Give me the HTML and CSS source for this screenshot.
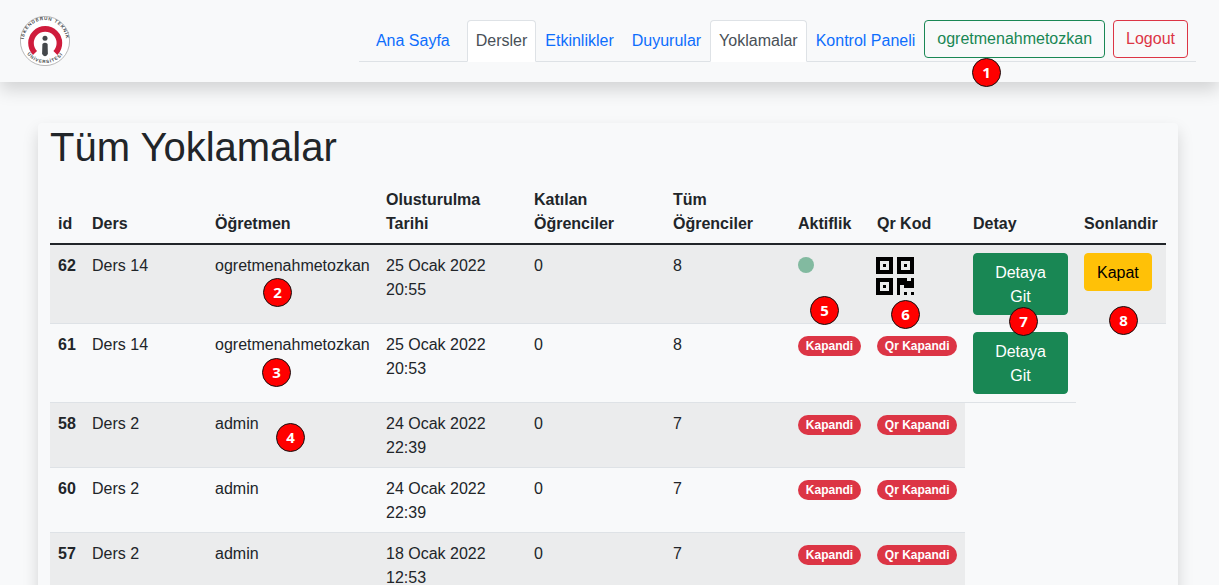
FILE: index.html
```html
<!DOCTYPE html>
<html lang="tr">
<head>
<meta charset="utf-8">
<title>Tüm Yoklamalar</title>
<link rel="stylesheet" href="styles.css">
</head>
<body>
<header class="navbar">
  <a class="logo" href="#">
    <svg width="50" height="50" viewBox="0 0 50 50" aria-label="İskenderun Teknik Üniversitesi">
      <defs>
        <path id="arcTop" d="M4.6 31 A21.2 21.2 0 1 1 45.4 31"/>
        <path id="arcBottom" d="M3.5 31 A22.4 22.4 0 0 0 46.5 31"/>
      </defs>
      <circle cx="25" cy="25" r="24.6" fill="#fff" stroke="#9a9a9a" stroke-width=".7"/>
      <text class="logo-text"><textPath href="#arcTop" startOffset="50%" text-anchor="middle">İSKENDERUN TEKNİK</textPath></text>
      <text class="logo-text"><textPath href="#arcBottom" startOffset="50%" text-anchor="middle">ÜNİVERSİTESİ</textPath></text>
      <path d="M15 37 A14.2 14.2 0 1 1 35.4 37" fill="none" stroke="#cf1c3c" stroke-width="5.6"/>
      <circle cx="25" cy="22.3" r="2.5" fill="#45484b"/>
      <path d="M22.4 28 Q25 25.6 27.6 28 L27.9 38 Q25 42.5 22.1 38Z" fill="#45484b"/>
    </svg>
  </a>
  <ul class="tabs">
    <li class="tab-first"><a class="tab" href="#">Ana Sayfa</a></li>
    <li><a class="tab active" href="#">Dersler</a></li>
    <li><a class="tab" href="#">Etkinlikler</a></li>
    <li><a class="tab" href="#">Duyurular</a></li>
    <li><a class="tab active" href="#">Yoklamalar</a></li>
    <li><a class="tab" href="#">Kontrol Paneli</a></li>
    <li class="tab-btn"><a class="btn btn-outline-success" href="#">ogretmenahmetozkan</a></li>
    <li class="tab-btn"><a class="btn btn-outline-danger" href="#">Logout</a></li>
  </ul>
</header>

<main class="card">
  <h1>Tüm Yoklamalar</h1>
  <table>
    <colgroup>
      <col class="c-id"><col class="c-ders"><col class="c-ogr"><col class="c-tarih"><col class="c-kat"><col class="c-tum"><col class="c-akt"><col class="c-qr"><col class="c-det"><col class="c-son">
    </colgroup>
    <thead>
      <tr><th>id</th><th>Ders</th><th>Öğretmen</th><th>Olusturulma Tarihi</th><th>Katılan Öğrenciler</th><th>Tüm Öğrenciler</th><th>Aktiflik</th><th>Qr Kod</th><th>Detay</th><th>Sonlandir</th></tr>
    </thead>
    <tbody>
      <tr class="odd">
        <th>62</th><td>Ders 14</td><td>ogretmenahmetozkan</td><td>25 Ocak 2022 20:55</td><td>0</td><td>8</td>
        <td><span class="dot"></span></td>
        <td>
          <svg class="qr" width="38" height="38" viewBox="0 0 38 38" shape-rendering="crispEdges" aria-label="QR">
            <path fill="#000" fill-rule="evenodd" d="M0 0h17v17H0zM4 4v9h9V4zM7 7h3v3H7zM21 0h17v17H21zM25 4v9h9V4zM28 7h3v3h-3zM0 21h17v17H0zM4 25v9h9v-9zM7 28h3v3H7z"/>
            <path fill="#000" transform="translate(21 21) scale(3.4)" d="M0 0h3v1h1V0h1v3H2V2H1v3H0zM2 4h1v1H2zM4 4h1v1H4z"/>
          </svg>
        </td>
        <td><a class="btn btn-success" href="#">Detaya Git</a></td>
        <td><a class="btn btn-warning" href="#">Kapat</a></td>
      </tr>
      <tr>
        <th>61</th><td>Ders 14</td><td>ogretmenahmetozkan</td><td>25 Ocak 2022 20:53</td><td>0</td><td>8</td>
        <td><span class="badge">Kapandi</span></td><td><span class="badge">Qr Kapandi</span></td>
        <td><a class="btn btn-success" href="#">Detaya Git</a></td>
      </tr>
      <tr class="odd">
        <th>58</th><td>Ders 2</td><td>admin</td><td>24 Ocak 2022 22:39</td><td>0</td><td>7</td>
        <td><span class="badge">Kapandi</span></td><td><span class="badge">Qr Kapandi</span></td>
      </tr>
      <tr>
        <th>60</th><td>Ders 2</td><td>admin</td><td>24 Ocak 2022 22:39</td><td>0</td><td>7</td>
        <td><span class="badge">Kapandi</span></td><td><span class="badge">Qr Kapandi</span></td>
      </tr>
      <tr class="odd">
        <th>57</th><td>Ders 2</td><td>admin</td><td>18 Ocak 2022 12:53</td><td>0</td><td>7</td>
        <td><span class="badge">Kapandi</span></td><td><span class="badge">Qr Kapandi</span></td>
      </tr>
    </tbody>
  </table>
</main>

<span class="pin pin-1">1</span>
<span class="pin pin-2">2</span>
<span class="pin pin-3">3</span>
<span class="pin pin-4">4</span>
<span class="pin pin-5">5</span>
<span class="pin pin-6">6</span>
<span class="pin pin-7">7</span>
<span class="pin pin-8">8</span>
</body>
</html>
```
FILE: styles.css
```css
* { box-sizing: border-box; }
html { height: 100%; overflow: hidden; }
body {
  margin: 0;
  height: 100%;
  overflow: hidden;
  position: relative;
  background: #f8f9fa;
  color: #212529;
  font: 400 16px/1.5 "Liberation Sans", Arial, sans-serif;
}
a { text-decoration: none; }

.navbar {
  position: relative;
  z-index: 1;
  display: flex;
  justify-content: space-between;
  align-items: flex-start;
  height: 82px;
  padding: 16px 23px 0 20px;
  background: #f8f9fa;
  box-shadow: 0 8px 16px rgba(0, 0, 0, .15);
}
.logo { display: block; height: 50px; }
.logo svg { display: block; }
.logo-text { font: 700 4.6px "Liberation Sans", Arial, sans-serif; letter-spacing: .8px; fill: #45484b; }

.tabs {
  display: flex;
  list-style: none;
  margin: 4px 0 0;
  padding: 0;
  height: 42px;
  border-bottom: 1px solid #dee2e6;
}
.tab-first { margin: 0 8px; }
.tab-btn { margin-right: 8px; }
.tab {
  display: block;
  height: 42px;
  padding: 8px;
  border: 1px solid transparent;
  border-radius: 4px 4px 0 0;
  color: #0d6efd;
}
.tab.active {
  color: #495057;
  background: #fff;
  border-color: #dee2e6 #dee2e6 #fff;
}

.btn {
  display: inline-block;
  padding: 6px 12px;
  border: 1px solid transparent;
  border-radius: 4px;
  text-align: center;
}
td .btn { padding: 7px 12px 5px; margin: -1px 0 1px; }
.btn-outline-success { color: #198754; border-color: #198754; }
.btn-outline-danger { color: #dc3545; border-color: #dc3545; }
.btn-success { color: #fff; background: #198754; border-color: #198754; }
.btn-warning { color: #000; background: #ffc107; border-color: #ffc107; }

.card {
  width: 1140px;
  margin: 41px 0 0 38px;
  padding: 0 12px;
  background: #f8f9fa;
  border-radius: 4px;
  box-shadow: 0 8px 16px rgba(0, 0, 0, .15);
}
h1 {
  margin: 0 0 8px;
  font-size: 40px;
  font-weight: 500;
  line-height: 1.2;
}

table {
  width: 100%;
  table-layout: fixed;
  border-collapse: collapse;
}
.c-id { width: 34px; }
.c-ders { width: 123px; }
.c-ogr { width: 171px; }
.c-tarih { width: 148px; }
.c-kat { width: 139px; }
.c-tum { width: 125px; }
.c-akt { width: 79px; }
.c-qr { width: 96px; }
.c-det { width: 111px; }
.c-son { width: 90px; }

th, td {
  padding: 9px 8px 7px;
  text-align: left;
  vertical-align: top;
  border-bottom: 1px solid #dee2e6;
}
thead th {
  vertical-align: bottom;
  border-bottom: 2px solid #212529;
}
.odd th, .odd td { background: rgba(0, 0, 0, .05); }

.dot {
  display: block;
  width: 16px;
  height: 16px;
  margin-top: 3px;
  border-radius: 50%;
  background: rgba(25, 135, 84, .5);
}
.qr { display: block; margin: 3px 0 0 -1px; }
.badge {
  display: inline-block;
  padding: 4.2px 7.8px;
  border-radius: 10.5px;
  background: #dc3545;
  color: #fff;
  font-size: 12px;
  font-weight: 700;
  line-height: 1;
  white-space: nowrap;
}

.pin {
  position: absolute;
  z-index: 2;
  display: flex;
  align-items: center;
  justify-content: center;
  width: 29px;
  height: 29px;
  border: 1px solid #111;
  border-radius: 50%;
  background: #f00;
  color: #fff;
  font: 700 15px/1 "Open Sans", sans-serif;
}
.pin-1 { left: 972px; top: 58px; }
.pin-2 { left: 263px; top: 278px; }
.pin-3 { left: 262px; top: 358px; }
.pin-4 { left: 276px; top: 423px; }
.pin-5 { left: 810px; top: 296px; }
.pin-6 { left: 891px; top: 300px; }
.pin-7 { left: 1009px; top: 307px; }
.pin-8 { left: 1109px; top: 306px; }
```
